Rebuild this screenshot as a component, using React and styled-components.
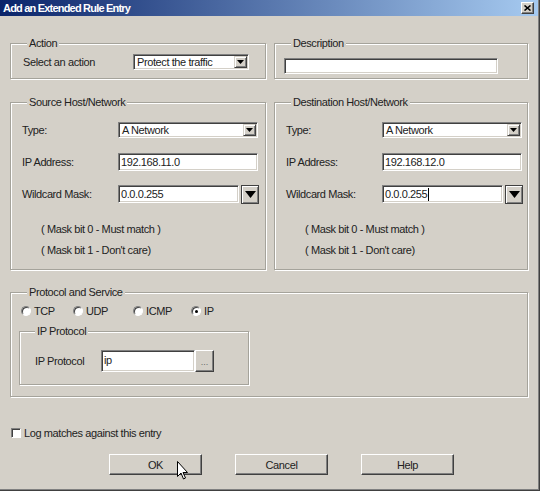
import React from 'react';
import styled, { createGlobalStyle } from 'styled-components';

const GlobalStyle = createGlobalStyle`
  html, body {
    margin: 0;
    padding: 0;
    background: #d4d0c8;
    overflow: hidden;
  }
  body {
    font-family: "Liberation Sans", Arial, sans-serif;
  }
`;

const Window = styled.div`
  width: 540px;
  height: 491px;
  box-sizing: border-box;
  background: #d4d0c8;
  border-right: 1px solid #404040;
  border-bottom: 1px solid #404040;
  font-size: 11px;
  letter-spacing: -0.4px;
  color: #222;
`;

const Frame = styled.div`
  height: 100%;
  box-sizing: border-box;
  border-right: 1px solid #808080;
  border-bottom: 1px solid #808080;
  display: flex;
  flex-direction: column;
`;

const TitleBar = styled.div`
  height: 16px;
  flex: none;
  display: flex;
  align-items: center;
  justify-content: space-between;
  padding: 0 4px 0 3px;
  background: linear-gradient(to right, #0a246a, #a6caf0);
  color: #fff;
  font-weight: bold;
  font-size: 11px;
  letter-spacing: -0.8px;
`;

const CloseButton = styled.span`
  width: 13px;
  height: 12px;
  box-sizing: border-box;
  display: flex;
  align-items: center;
  justify-content: center;
  background: #d4d0c8;
  border: 1px solid;
  border-color: #fff #404040 #404040 #fff;
  box-shadow: inset -1px -1px 0 #808080;
`;

const Body = styled.div`
  padding: 21px 0 0 10px;
  display: flex;
  flex-direction: column;
`;

const Grid = styled.div`
  display: grid;
  grid-template-columns: 256px 254px;
  grid-template-rows: auto auto auto;
  column-gap: 8px;
  row-gap: 17px;
`;

const Group = styled.fieldset`
  margin: 0;
  margin-top: ${p => p.$shift || 0}px;
  padding: 0;
  min-width: 0;
  border: 1px solid #a5a39b;
  box-shadow: inset 1px 1px 0 #fff, 1px 1px 0 #fff;
  grid-column: ${p => (p.$wide ? '1 / -1' : 'auto')};
  width: ${p => (p.$w ? `${p.$w}px` : 'auto')};
  box-sizing: border-box;
`;

const Legend = styled.legend`
  margin-left: ${p => p.$offset || 16}px;
  padding: 0 2px;
  line-height: 12px;
  background: #d4d0c8;
`;

const GroupBody = styled.div`
  padding: ${p => p.$pad};
  display: ${p => (p.$row ? 'flex' : 'block')};
  align-items: center;
`;

const FormRow = styled.div`
  display: flex;
  align-items: center;
  height: 18px;
  & + & {
    margin-top: 14px;
  }
`;

const FieldLabel = styled.span`
  width: ${p => p.$w}px;
  flex: none;
  white-space: nowrap;
`;

const TextBox = styled.div`
  box-sizing: border-box;
  width: ${p => p.$w}px;
  height: ${p => p.$h || 18}px;
  background: #fff;
  border: 1px solid;
  border-color: #808080 #fff #fff #808080;
  box-shadow: inset 1px 1px 0 #404040, inset -1px -1px 0 #d4d0c8;
  padding: 0 2px;
  display: flex;
  align-items: ${p => (p.$top ? 'flex-start' : 'center')};
  padding-top: ${p => (p.$top ? '3px' : '0')};
  white-space: nowrap;
  overflow: hidden;
  flex: none;
`;

const Caret = styled.span`
  display: inline-block;
  width: 1px;
  height: 13px;
  background: #000;
  margin-left: 1px;
`;

const Combo = styled.div`
  box-sizing: border-box;
  width: ${p => p.$w}px;
  height: 16px;
  background: #fff;
  border: 1px solid;
  border-color: #808080 #fff #fff #808080;
  box-shadow: inset 1px 1px 0 #404040, inset -1px -1px 0 #d4d0c8;
  display: flex;
  padding: 1px;
  flex: none;
`;

const ComboText = styled.span`
  flex: 1;
  padding-left: 2px;
  line-height: 12px;
  white-space: nowrap;
`;

const ComboArrow = styled.span`
  width: 13px;
  box-sizing: border-box;
  background: #d4d0c8;
  border: 1px solid;
  border-color: #d4d0c8 #404040 #404040 #d4d0c8;
  box-shadow: inset 1px 1px 0 #fff, inset -1px -1px 0 #808080;
  display: flex;
  align-items: center;
  justify-content: center;
`;

const ArrowButton = styled.span`
  width: 18px;
  height: 19px;
  margin-left: 2px;
  box-sizing: border-box;
  flex: none;
  background: #d4d0c8;
  border: 1px solid #404040;
  box-shadow: inset 1px 1px 0 #fff, inset -1px -1px 0 #808080;
  display: flex;
  align-items: center;
  justify-content: center;
`;

const MaskNote = styled.div`
  padding-left: 19px;
  line-height: 14px;
  margin-top: ${p => p.$gap}px;
`;

const RadioRow = styled.div`
  display: flex;
  align-items: center;
  height: 14px;
  padding-left: 2px;
`;

const RadioItem = styled.label`
  display: flex;
  align-items: center;
  width: ${p => p.$w}px;
`;

const RadioCircle = styled.span`
  width: 10px;
  height: 10px;
  box-sizing: border-box;
  border-radius: 50%;
  background: #fff;
  border: 1px solid;
  border-color: #808080 #fff #fff #808080;
  box-shadow: inset 1px 1px 0 #404040;
  margin-right: 3px;
  display: flex;
  align-items: center;
  justify-content: center;
  &::after {
    content: '';
    width: 3px;
    height: 3px;
    border-radius: 50%;
    background: ${p => (p.$checked ? '#000' : 'transparent')};
  }
`;

const Nested = styled.div`
  margin-top: 7px;
`;

const SmallButton = styled.span`
  width: 19px;
  height: 22px;
  box-sizing: border-box;
  flex: none;
  background: #d4d0c8;
  border: 1px solid;
  border-color: #fff #404040 #404040 #fff;
  box-shadow: inset -1px -1px 0 #808080;
  color: #6a6a6a;
  font-size: 9px;
  display: flex;
  align-items: flex-end;
  justify-content: center;
  padding-bottom: 4px;
  letter-spacing: 0;
`;

const CheckRow = styled.label`
  display: flex;
  align-items: center;
  height: 14px;
  margin-top: 29px;
  padding-left: 1px;
`;

const CheckBox = styled.span`
  width: 10px;
  height: 10px;
  box-sizing: border-box;
  background: #fff;
  border: 1px solid;
  border-color: #808080 #fff #fff #808080;
  box-shadow: inset 1px 1px 0 #404040;
  margin-right: 3px;
`;

const ButtonRow = styled.div`
  display: flex;
  gap: 33px;
  margin-top: 14px;
  padding-left: 99px;
`;

const Button = styled.div`
  position: relative;
  width: 93px;
  height: 21px;
  box-sizing: border-box;
  background: #d4d0c8;
  border: 1px solid;
  border-color: #fff #404040 #404040 #fff;
  box-shadow: inset -1px -1px 0 #808080;
  display: flex;
  align-items: center;
  justify-content: center;
`;

const Pointer = styled.svg`
  position: absolute;
  left: 67px;
  top: 6px;
`;

const SmallTriangle = () => (
  <svg width="7" height="4" viewBox="0 0 7 4">
    <polygon points="0,0 7,0 3.5,4" fill="#000" />
  </svg>
);

const BigTriangle = () => (
  <svg width="11" height="7" viewBox="0 0 11 7">
    <polygon points="0,0 11,0 5.5,7" fill="#000" />
  </svg>
);

const HostGroup = ({ title, ip, caret }) => (
  <Group>
    <Legend>{title}</Legend>
    <GroupBody $pad="13px 7px 12px 11px">
      <FormRow>
        <FieldLabel $w={96}>Type:</FieldLabel>
        <Combo $w={140}>
          <ComboText>A Network</ComboText>
          <ComboArrow><SmallTriangle /></ComboArrow>
        </Combo>
      </FormRow>
      <FormRow>
        <FieldLabel $w={96}>IP Address:</FieldLabel>
        <TextBox $w={140}>{ip}</TextBox>
      </FormRow>
      <FormRow>
        <FieldLabel $w={96}>Wildcard Mask:</FieldLabel>
        <TextBox $w={121}>0.0.0.255{caret && <Caret />}</TextBox>
        <ArrowButton><BigTriangle /></ArrowButton>
      </FormRow>
      <MaskNote $gap={19}>( Mask bit 0 - Must match )</MaskNote>
      <MaskNote $gap={7}>( Mask bit 1 - Don't care)</MaskNote>
    </GroupBody>
  </Group>
);

const radios = [
  { name: 'TCP', w: 52 },
  { name: 'UDP', w: 60 },
  { name: 'ICMP', w: 58 },
  { name: 'IP', w: 40, checked: true },
];

export default function App() {
  return (
    <>
      <GlobalStyle />
      <Window>
        <Frame>
          <TitleBar>
            <span>Add an Extended Rule Entry</span>
            <CloseButton>
              <svg width="7" height="6" viewBox="0 0 7 6">
                <path d="M0.5 0.5 L6.5 5.5 M6.5 0.5 L0.5 5.5" stroke="#000" strokeWidth="1.6" />
              </svg>
            </CloseButton>
          </TitleBar>
          <Body>
            <Grid>
              <Group>
                <Legend>Action</Legend>
                <GroupBody $row $pad="5px 0 8px 12px">
                  <FieldLabel $w={110}>Select an action</FieldLabel>
                  <Combo $w={116}>
                    <ComboText>Protect the traffic</ComboText>
                    <ComboArrow><SmallTriangle /></ComboArrow>
                  </Combo>
                </GroupBody>
              </Group>
              <Group>
                <Legend>Description</Legend>
                <GroupBody $pad="9px 0 0 9px">
                  <TextBox $w={214} $h={16} />
                </GroupBody>
              </Group>

              <HostGroup title="Source Host/Network" ip="192.168.11.0" />
              <HostGroup title="Destination Host/Network" ip="192.168.12.0" caret />

              <Group $wide $shift={-1}>
                <Legend>Protocol and Service</Legend>
                <GroupBody $pad="6px 0 11px 8px">
                  <RadioRow>
                    {radios.map(r => (
                      <RadioItem key={r.name} $w={r.w}>
                        <RadioCircle $checked={r.checked} />
                        {r.name}
                      </RadioItem>
                    ))}
                  </RadioRow>
                  <Nested>
                    <Group $w={230}>
                      <Legend $offset={15}>IP Protocol</Legend>
                      <GroupBody $row $pad="13px 0 12px 15px">
                        <FieldLabel $w={66}>IP Protocol</FieldLabel>
                        <TextBox $w={94} $h={22} $top>ip</TextBox>
                        <SmallButton>...</SmallButton>
                      </GroupBody>
                    </Group>
                  </Nested>
                </GroupBody>
              </Group>
            </Grid>

            <CheckRow>
              <CheckBox />
              Log matches against this entry
            </CheckRow>

            <ButtonRow>
              <Button>
                OK
                <Pointer width="12" height="19" viewBox="0 0 12 19">
                  <path
                    d="M0.5 0.5 L0.5 15.5 L4 12 L6.5 18 L8.5 17 L6 11.5 L10.5 11.5 Z"
                    fill="#fff"
                    stroke="#000"
                    strokeWidth="1"
                    strokeLinejoin="miter"
                  />
                </Pointer>
              </Button>
              <Button>Cancel</Button>
              <Button>Help</Button>
            </ButtonRow>
          </Body>
        </Frame>
      </Window>
    </>
  );
}
